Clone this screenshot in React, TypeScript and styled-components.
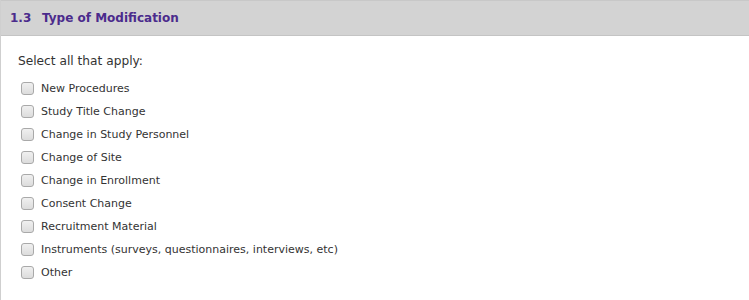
import styled, { createGlobalStyle } from 'styled-components';

const GlobalStyle = createGlobalStyle`
  html, body {
    margin: 0;
    padding: 0;
    background: #ffffff;
  }
  body {
    font-family: Verdana, "DejaVu Sans", sans-serif;
  }
`;

const options = [
    'New Procedures',
    'Study Title Change',
    'Change in Study Personnel',
    'Change of Site',
    'Change in Enrollment',
    'Consent Change',
    'Recruitment Material',
    'Instruments (surveys, questionnaires, interviews, etc)',
    'Other',
];

const Panel = styled.section`
    width: 749px;
    height: 300px;
    box-sizing: border-box;
    border-left: 1px solid #cfcfcf;
    background: #fff;
`;

const Header = styled.header`
    height: 36px;
    box-sizing: border-box;
    background: #d3d3d3;
    border-top: 1px solid #c8c8c8;
    border-bottom: 1px solid #c4c4c4;
    display: flex;
    align-items: center;
    padding-left: 9px;
    font-weight: bold;
    font-size: 12px;
    color: #4b2b8c;
`;

const Number = styled.span`
    width: 32px;
`;

const Body = styled.div`
    padding: 18px 0 0 17px;
`;

const Prompt = styled.div`
    font-size: 12.2px;
    color: #333;
    margin-bottom: 9px;
`;

const List = styled.ul`
    list-style: none;
    margin: 0;
    padding: 0 0 0 3px;
    display: flex;
    flex-direction: column;
`;

const Item = styled.li`
    height: 23px;
    display: flex;
    align-items: center;
    font-size: 11px;
    color: #333;
`;

const Box = styled.span`
    width: 11px;
    height: 11px;
    border: 1px solid #a9a9a9;
    border-radius: 3px;
    background: linear-gradient(#f0f0f0, #dcdcdc);
    margin-right: 7px;
    flex-shrink: 0;
`;

export default function App() {
    return (
        <>
            <GlobalStyle />
            <Panel>
                <Header>
                    <Number>1.3</Number>
                    <span>Type of Modification</span>
                </Header>
                <Body>
                    <Prompt>Select all that apply:</Prompt>
                    <List>
                        {options.map((o) => (
                            <Item key={o}>
                                <Box />
                                {o}
                            </Item>
                        ))}
                    </List>
                </Body>
            </Panel>
        </>
    );
}
